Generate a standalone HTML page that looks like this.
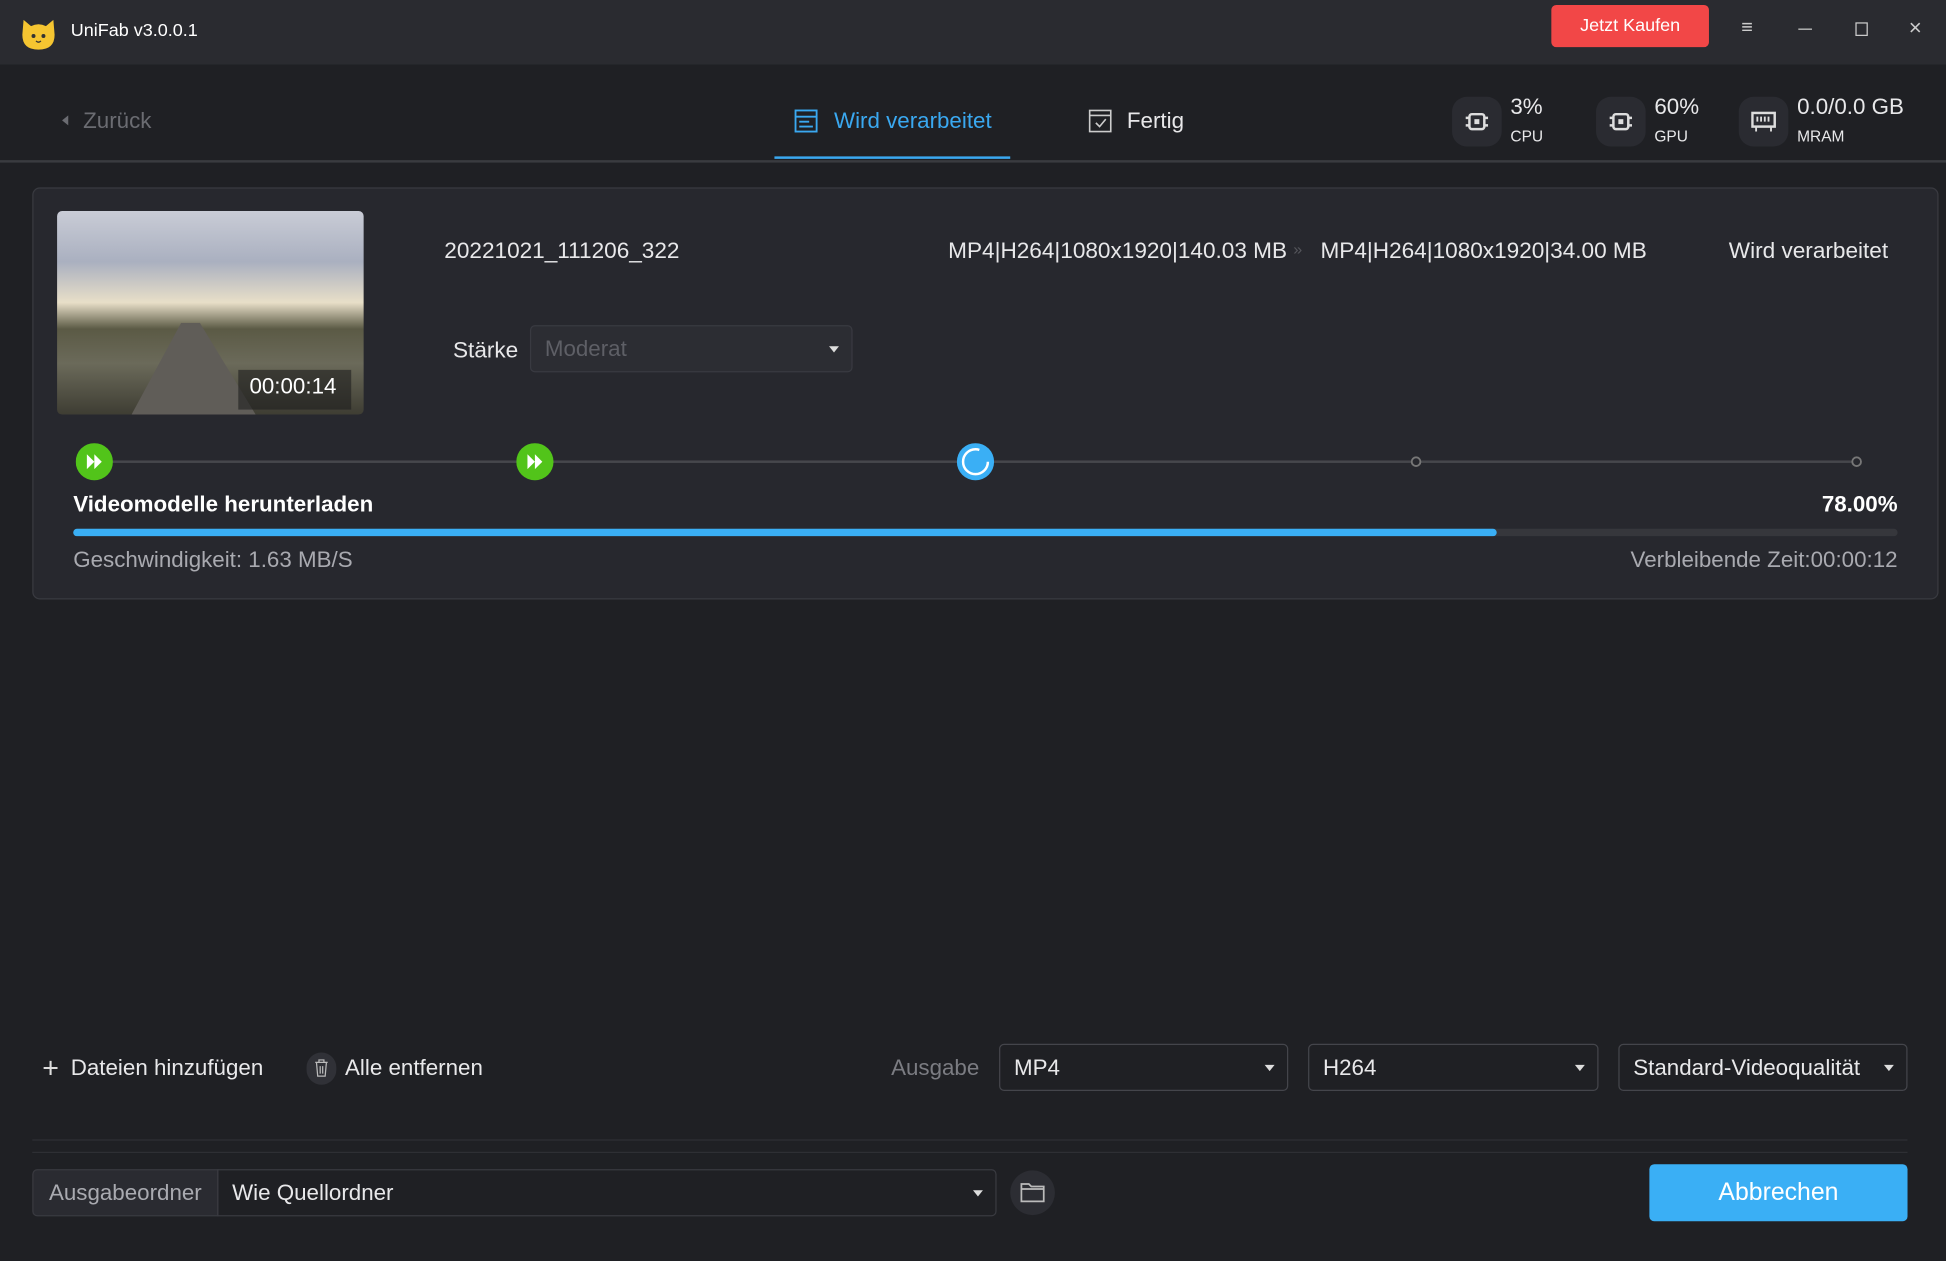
<!DOCTYPE html>
<html><head><meta charset="utf-8"><style>
*{margin:0;padding:0;box-sizing:border-box}
html,body{width:1946px;height:1261px;overflow:hidden;background:#1f2024}
#w{position:absolute;left:0;top:0;width:1568px;height:1016px;transform:scale(1.24107,1.24114);transform-origin:0 0;font-family:"Liberation Sans",sans-serif;color:#e8e8ea;background:#1f2024}
.a{position:absolute;white-space:nowrap}
.tb{position:absolute;left:0;top:0;width:1568px;height:52px;background:#2a2b30}
.sel{position:absolute;border:1px solid #44454b;border-radius:4px;height:38px;font-size:18px;line-height:36px;padding-left:11px;color:#e8e8ea}
.sel:after{content:"";position:absolute;right:10px;top:16px;border-left:4px solid transparent;border-right:4px solid transparent;border-top:5px solid #ddd}
.st{position:absolute;width:40px;height:40px;border-radius:12px;background:#2a2b31}
</style></head><body><div id="w">
<div class="tb"></div>
<svg class="a" style="left:16px;top:12px" width="30" height="30" viewBox="0 0 30 30"><path d="M3 4 L9 9 Q15 6 21 9 L27 4 L28 16 Q28 28 15 28 Q2 28 2 16Z" fill="#f5c531"/><circle cx="11" cy="17" r="1.6" fill="#333"/><circle cx="19" cy="17" r="1.6" fill="#333"/><path d="M13 21 q2 2 4 0" stroke="#333" fill="none"/></svg>
<div class="a" style="left:57px;top:17px;font-size:14.5px;color:#fff">UniFab v3.0.0.1</div>
<div class="a" style="left:1250px;top:4px;width:127px;height:34px;background:#f24747;border-radius:4px;font-size:14.5px;line-height:34px;text-align:center;color:#fff">Jetzt Kaufen</div>
<div class="a" style="left:1403px;top:14px;font-size:16px;color:#ccc">≡</div>
<div class="a" style="left:1449px;top:23px;width:11px;height:1px;background:#ccc"></div>
<div class="a" style="left:1495px;top:18px;width:10px;height:11px;border:1px solid #ccc"></div>
<div class="a" style="left:1538px;top:12px;font-size:18px;color:#ccc">×</div>
<div class="a" style="left:0;top:129px;width:1568px;height:2px;background:#3a3b40"></div>
<div class="a" style="left:50px;top:93px;width:0;height:0;border-top:4px solid transparent;border-bottom:4px solid transparent;border-right:5px solid #6b6c72"></div>
<div class="a" style="left:67px;top:87px;font-size:18px;color:#6b6c72">Zurück</div>
<svg class="a" style="left:640px;top:88px" width="19" height="19" viewBox="0 0 19 19"><rect x="1" y="1" width="17" height="17" fill="none" stroke="#3aa8f0" stroke-width="1.5"/><path d="M1 6h17M4 10h8M4 14h11" stroke="#3aa8f0" stroke-width="1.5"/></svg>
<div class="a" style="left:672px;top:87px;font-size:18px;color:#3aa8f0">Wird verarbeitet</div>
<div class="a" style="left:624px;top:126px;width:190px;height:2px;background:#3aa8f0"></div>
<svg class="a" style="left:877px;top:88px" width="19" height="19" viewBox="0 0 19 19"><rect x="1" y="1" width="17" height="17" fill="none" stroke="#ccc" stroke-width="1.3"/><path d="M1 5h17M6 11l3 3 5-6" stroke="#ccc" stroke-width="1.3" fill="none"/></svg>
<div class="a" style="left:908px;top:87px;font-size:18px;color:#e8e8ea">Fertig</div>
<div class="st" style="left:1170px;top:78px"></div><div class="st" style="left:1286px;top:78px"></div><div class="st" style="left:1401px;top:78px"></div>
<svg class="a" style="left:1180px;top:88px" width="20" height="20" viewBox="0 0 20 20"><rect x="4" y="4" width="12" height="12" rx="2" fill="none" stroke="#ddd" stroke-width="2"/><rect x="8" y="8" width="4" height="4" fill="#ddd"/><path d="M1 7h3M1 13h3M16 7h3M16 13h3" stroke="#ddd" stroke-width="2"/></svg>
<svg class="a" style="left:1296px;top:88px" width="20" height="20" viewBox="0 0 20 20"><rect x="4" y="4" width="12" height="12" rx="2" fill="none" stroke="#ddd" stroke-width="2"/><rect x="8" y="8" width="4" height="4" fill="#ddd"/><path d="M1 7h3M1 13h3M16 7h3M16 13h3" stroke="#ddd" stroke-width="2"/></svg>
<svg class="a" style="left:1411px;top:89px" width="20" height="18" viewBox="0 0 20 18"><rect x="1" y="2" width="18" height="11" fill="none" stroke="#ddd" stroke-width="2"/><path d="M5 5v4M8 5v4M11 5v4M14 5v4M4 13v4M16 13v4" stroke="#ddd" stroke-width="1.5"/></svg>
<div class="a" style="left:1217px;top:76px;font-size:18px">3%</div><div class="a" style="left:1217px;top:103px;font-size:12.5px">CPU</div>
<div class="a" style="left:1333px;top:76px;font-size:18px">60%</div><div class="a" style="left:1333px;top:103px;font-size:12.5px">GPU</div>
<div class="a" style="left:1448px;top:76px;font-size:18px">0.0/0.0 GB</div><div class="a" style="left:1448px;top:103px;font-size:12.5px">MRAM</div>
<div class="a" style="left:26px;top:151px;width:1536px;height:332px;background:#27282e;border:1px solid #393a40;border-radius:6px"></div>
<div class="a" style="left:46px;top:170px;width:247px;height:164px;border-radius:4px;overflow:hidden;background:linear-gradient(180deg,#c9ccd6 0%,#aab0c0 25%,#e8dfc8 45%,#5b5a45 58%,#6b6a5a 75%,#3e3d33 100%)">
<div class="a" style="left:60px;top:90px;width:100px;height:74px;background:#605d58;clip-path:polygon(40% 0,55% 0,100% 100%,0 100%)"></div>
<div class="a" style="left:146px;top:128px;width:91px;height:32px;background:rgba(30,30,30,.6)"></div>
<div class="a" style="left:155px;top:131px;font-size:18px;color:#fff">00:00:14</div></div>
<div class="a" style="left:358px;top:192px;font-size:18.2px">20221021_111206_322</div>
<div class="a" style="left:764px;top:192px;font-size:18.2px">MP4|H264|1080x1920|140.03 MB</div>
<div class="a" style="left:1042px;top:193px;font-size:13px;color:#55565c">»</div>
<div class="a" style="left:1064px;top:192px;font-size:18.2px">MP4|H264|1080x1920|34.00 MB</div>
<div class="a" style="left:1393px;top:192px;font-size:18.2px">Wird verarbeitet</div>
<div class="a" style="left:365px;top:272px;font-size:18.2px">Stärke</div>
<div class="sel" style="left:427px;top:262px;width:260px;background:#2c2d33;border-color:#393a41;color:#5e5f66">Moderat</div>
<div class="a" style="left:76px;top:371px;width:1420px;height:2px;background:#46474c"></div>
<svg class="a" style="left:61px;top:357px" width="30" height="30"><circle cx="15" cy="15" r="15" fill="#52c41a"/><path d="M9 9l6 6-6 6zM15 9l6 6-6 6z" fill="#fff"/></svg>
<svg class="a" style="left:416px;top:357px" width="30" height="30"><circle cx="15" cy="15" r="15" fill="#52c41a"/><path d="M9 9l6 6-6 6zM15 9l6 6-6 6z" fill="#fff"/></svg>
<svg class="a" style="left:771px;top:357px" width="30" height="30"><circle cx="15" cy="15" r="15" fill="#3aaff5"/><circle cx="15" cy="15" r="10" fill="none" stroke="#fff" stroke-width="2" stroke-dasharray="50 13"/></svg>
<svg class="a" style="left:1136px;top:367px" width="10" height="10"><circle cx="5" cy="5" r="3.5" fill="#27282e" stroke="#777" stroke-width="1.5"/></svg>
<svg class="a" style="left:1491px;top:367px" width="10" height="10"><circle cx="5" cy="5" r="3.5" fill="#27282e" stroke="#777" stroke-width="1.5"/></svg>
<div class="a" style="left:59px;top:396px;font-size:18px;font-weight:bold;color:#fff">Videomodelle herunterladen</div>
<div class="a" style="right:39px;top:396px;font-size:18px;font-weight:bold;color:#fff">78.00%</div>
<div class="a" style="left:59px;top:426px;width:1470px;height:6px;border-radius:3px;background:#36373c"></div>
<div class="a" style="left:59px;top:426px;width:1147px;height:6px;border-radius:3px;background:#3aaff5"></div>
<div class="a" style="left:59px;top:441px;font-size:18px;color:#a9aab0">Geschwindigkeit: 1.63 MB/S</div>
<div class="a" style="right:39px;top:441px;font-size:18px;color:#a9aab0">Verbleibende Zeit:00:00:12</div>
<div class="a" style="left:34px;top:847px;font-size:23px;font-weight:300;color:#ddd">+</div>
<div class="a" style="left:57px;top:850px;font-size:18px">Dateien hinzufügen</div>
<div class="a" style="left:247px;top:848px;width:24px;height:26px;border-radius:12px;background:#303137"></div>
<svg class="a" style="left:253px;top:853px" width="12" height="15" viewBox="0 0 12 15"><path d="M1 3h10M4 3V1h4v2M2 3l1 11h6l1-11M5 6v6M7 6v6" stroke="#bbb" fill="none"/></svg>
<div class="a" style="left:278px;top:850px;font-size:18px">Alle entfernen</div>
<div class="a" style="left:718px;top:850px;font-size:18px;color:#7b7c82">Ausgabe</div>
<div class="sel" style="left:805px;top:841px;width:233px">MP4</div>
<div class="sel" style="left:1054px;top:841px;width:234px">H264</div>
<div class="sel" style="left:1304px;top:841px;width:233px">Standard-Videoqualität</div>
<div class="a" style="left:26px;top:918px;width:1511px;height:1px;background:#2e2f34"></div>
<div class="a" style="left:26px;top:928px;width:1511px;height:1px;background:#2e2f34"></div>
<div class="a" style="left:26px;top:942px;width:150px;height:38px;background:#2a2b31;border:1px solid #393a40;border-radius:4px 0 0 4px;font-size:18px;line-height:36px;text-align:center;color:#a9aab0">Ausgabeordner</div>
<div class="sel" style="left:175px;top:942px;width:628px;border-radius:0 4px 4px 0;border-color:#393a40">Wie Quellordner</div>
<div class="a" style="left:814px;top:943px;width:36px;height:36px;border-radius:18px;background:#2c2d33"></div>
<svg class="a" style="left:822px;top:952px" width="20" height="17" viewBox="0 0 20 17"><path d="M1 2h6l2 2h10v12H1zM1 6h18" stroke="#bbb" stroke-width="1.4" fill="none"/></svg>
<div class="a" style="left:1329px;top:938px;width:208px;height:46px;background:#3aaff5;border-radius:4px;font-size:20px;line-height:46px;text-align:center;color:#fff">Abbrechen</div>
</div></body></html>
